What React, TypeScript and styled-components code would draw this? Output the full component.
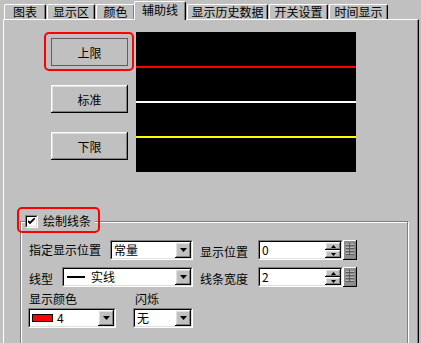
import React from 'react';
import styled, { createGlobalStyle, css } from 'styled-components';

const Global = createGlobalStyle`
  html, body { margin: 0; padding: 0; background: #c0c0c0; }
  body {
    font-family: "Noto Sans CJK SC", "Noto Sans", sans-serif;
    font-size: 12px;
    color: #000;
  }
`;

const raised = css`
  box-shadow: inset -1px -1px #000, inset 1px 1px #fff, inset -2px -2px #808080, inset 2px 2px #dfdfdf;
`;

const Window = styled.div`
  width: 421px;
  height: 343px;
  overflow: hidden;
  background: #c0c0c0;
`;

const TabStrip = styled.div`
  display: flex;
  align-items: flex-end;
  height: 19px;
  padding-left: 4px;
  gap: 1px;
  position: relative;
  z-index: 1;
`;

const Tab = styled.div<{ $w: number; $active?: boolean }>`
  box-sizing: border-box;
  width: ${(p) => p.$w}px;
  height: ${(p) => (p.$active ? 19 : 15)}px;
  margin: ${(p) => (p.$active ? '0 0 -1px -2px' : '0')};
  background: #c0c0c0;
  border-top: 1px solid #fff;
  border-left: 1px solid #fff;
  border-right: 1px solid #000;
  border-radius: 2px 2px 0 0;
  box-shadow: inset -1px 0 #808080;
  display: flex;
  align-items: center;
  justify-content: center;
  padding-bottom: ${(p) => (p.$active ? 2 : 0)}px;
  line-height: 12px;
  white-space: nowrap;
`;

const Panel = styled.div`
  box-sizing: border-box;
  margin-left: 3px;
  width: 416px;
  height: 324px;
  border-top: 1px solid #fff;
  border-left: 1px solid #fff;
  border-right: 1px solid #000;
  box-shadow: inset -1px 0 #808080;
  padding-top: 12px;
`;

const TopArea = styled.div`
  display: flex;
  padding-left: 47px;
  gap: 8px;
`;

const ButtonColumn = styled.div`
  display: flex;
  flex-direction: column;
  width: 77px;
  padding-top: 6px;
  gap: 19px;
`;

const Highlight = styled.div<{ $t: number; $r: number; $b: number; $l: number }>`
  position: relative;
  display: flex;
  width: fit-content;
  &::after {
    content: '';
    position: absolute;
    top: -${(p) => p.$t}px;
    right: -${(p) => p.$r}px;
    bottom: -${(p) => p.$b}px;
    left: -${(p) => p.$l}px;
    border: 2px solid #ff0000;
    border-radius: 5px;
    pointer-events: none;
  }
`;

const LegendSlot = styled(Highlight)`
  margin: -9px 0 0 -4px;
`;

const PushButton = styled.div<{ $flat?: boolean }>`
  box-sizing: border-box;
  width: 77px;
  height: 28px;
  background: #c0c0c0;
  display: flex;
  align-items: center;
  justify-content: center;
  ${(p) => (p.$flat ? 'box-shadow: inset 0 0 0 1px #5e5e5e;' : raised)}
`;

const Canvas = styled.svg`
  display: block;
  background: #000;
`;

const Group = styled.div`
  box-sizing: border-box;
  margin: 49px 0 0 16px;
  width: 388px;
  height: 200px;
  border: 1px solid #808080;
  box-shadow: inset 1px 1px #fff, 1px 1px #fff;
  padding-left: 8px;
`;

const Legend = styled.div`
  display: flex;
  align-items: center;
  gap: 5px;
  height: 16px;
  padding-right: 4px;
  background: #c0c0c0;
`;

const CheckBox = styled.div`
  box-sizing: border-box;
  width: 13px;
  height: 13px;
  border: 1px solid;
  border-color: #808080 #fff #fff #808080;
  display: flex;
`;

const CheckInner = styled.div`
  flex: 1;
  background: #fff;
  border: 1px solid;
  border-color: #000 #dfdfdf #dfdfdf #000;
  display: flex;
  align-items: center;
  justify-content: center;
`;

const Rows = styled.div`
  display: flex;
  flex-direction: column;
  gap: 7px;
  margin-top: 11px;
`;

const Row = styled.div`
  display: flex;
  align-items: center;
`;

const LeftCell = styled.div`
  display: flex;
  align-items: center;
  gap: 9px;
  width: 164px;
`;

const Label = styled.span<{ $pt?: number }>`
  white-space: nowrap;
  line-height: 16px;
  padding-top: ${(p) => p.$pt ?? 0}px;
`;

const RightLabel = styled(Label)`
  margin: 0 10px 0 7px;
  width: 48px;
`;

const Sunken = styled.div<{ $w: number }>`
  box-sizing: border-box;
  width: ${(p) => p.$w}px;
  height: 20px;
  border: 1px solid;
  border-color: #808080 #fff #fff #808080;
  display: flex;
`;

const SunkenInner = styled.div`
  flex: 1;
  display: flex;
  background: #fff;
  border: 1px solid;
  border-color: #000 #dfdfdf #dfdfdf #000;
  min-width: 0;
`;

const FieldText = styled.div`
  flex: 1;
  display: flex;
  align-items: center;
  gap: 4px;
  padding-left: 2px;
  line-height: 14px;
  white-space: nowrap;
`;

const DropButton = styled.div`
  width: 16px;
  background: #c0c0c0;
  display: flex;
  align-items: center;
  justify-content: center;
  ${raised}
`;

const SpinColumn = styled.div`
  width: 16px;
  display: flex;
  flex-direction: column;
`;

const SpinButton = styled.div`
  flex: 1;
  background: #c0c0c0;
  display: flex;
  align-items: center;
  justify-content: center;
  ${raised}
`;

const PadButton = styled.svg`
  display: block;
  margin-top: -1px;
`;

const Swatch = styled.div<{ $c: string }>`
  box-sizing: border-box;
  width: 21px;
  height: 8px;
  background: ${(p) => p.$c};
  border: 1px solid #000;
`;

const LineSample = styled.div`
  width: 18px;
  height: 2px;
  background: #000;
  margin: 0 2px 0 1px;
`;

const Row3 = styled.div`
  display: flex;
  gap: 17px;
  margin: 4px 0 0 -1px;
`;

const Col = styled.div<{ $pl: number }>`
  display: flex;
  flex-direction: column;
  gap: 1px;
  & > span {
    padding-left: ${(p) => p.$pl}px;
  }
`;

const Arrow = ({ up, w = 7 }: { up?: boolean; w?: number }) => {
  const h = Math.ceil(w / 2);
  return (
    <svg width={w} height={h} viewBox={`0 0 ${w} ${h}`} style={{ display: 'block' }}>
      <polygon points={up ? `0,${h} ${w},${h} ${w / 2},0` : `0,0 ${w},0 ${w / 2},${h}`} fill="#000" />
    </svg>
  );
};

const Combo = ({ w, children }: { w: number; children: React.ReactNode }) => (
  <Sunken $w={w}>
    <SunkenInner>
      <FieldText>{children}</FieldText>
      <DropButton>
        <Arrow />
      </DropButton>
    </SunkenInner>
  </Sunken>
);

const Pad = () => (
  <PadButton width={14} height={20} viewBox="0 0 14 20">
    <rect x="0" y="0" width="14" height="20" fill="#000" />
    <rect x="0" y="0" width="13" height="19" fill="#fff" />
    <rect x="1" y="1" width="12" height="18" fill="#808080" />
    <rect x="1" y="1" width="11" height="17" fill="#8e8e8e" />
    {[4, 7, 10, 13].map((y) => (
      <g key={y}>
        <rect x="3" y={y} width="8" height="1" fill="#b8b8b8" />
        <rect x="3" y={y + 1} width="8" height="1" fill="#5a5a5a" />
      </g>
    ))}
    <rect x="6" y="3" width="1" height="12" fill="#5a5a5a" />
  </PadButton>
);

const Spin = ({ value }: { value: string }) => (
  <Row>
    <Sunken $w={85}>
      <SunkenInner>
        <FieldText>{value}</FieldText>
        <SpinColumn>
          <SpinButton>
            <Arrow up w={5} />
          </SpinButton>
          <SpinButton>
            <Arrow w={5} />
          </SpinButton>
        </SpinColumn>
      </SunkenInner>
    </Sunken>
    <Pad />
  </Row>
);

const tabs: { label: string; w: number; active?: boolean }[] = [
  { label: '图表', w: 42 },
  { label: '显示区', w: 48 },
  { label: '颜色', w: 39 },
  { label: '辅助线', w: 52, active: true },
  { label: '显示历史数据', w: 81 },
  { label: '开关设置', w: 59 },
  { label: '时间显示', w: 59 },
];

export default function App() {
  return (
    <Window>
      <Global />
      <TabStrip>
        {tabs.map((t) => (
          <Tab key={t.label} $w={t.w} $active={t.active}>
            {t.label}
          </Tab>
        ))}
      </TabStrip>
      <Panel>
        <TopArea>
          <ButtonColumn>
            <Highlight $t={6} $r={6} $b={5} $l={7}>
              <PushButton $flat>上限</PushButton>
            </Highlight>
            <PushButton>标准</PushButton>
            <PushButton>下限</PushButton>
          </ButtonColumn>
          <Canvas width={220} height={140} viewBox="0 0 220 140">
            <rect x="0" y="34" width="220" height="2" fill="#ff0000" />
            <rect x="0" y="69" width="220" height="2" fill="#ffffff" />
            <rect x="0" y="104" width="220" height="2" fill="#ffff00" />
          </Canvas>
        </TopArea>
        <Group>
          <LegendSlot $t={6} $r={5} $b={4} $l={8}>
            <Legend>
              <CheckBox>
                <CheckInner>
                  <svg width="7" height="7" viewBox="0 0 7 7" style={{ display: 'block' }}>
                    <polyline points="0,3 2,5 7,0" fill="none" stroke="#000" strokeWidth="1.8" />
                  </svg>
                </CheckInner>
              </CheckBox>
              <Label>绘制线条</Label>
            </Legend>
          </LegendSlot>
          <Rows>
            <Row>
              <LeftCell>
                <Label>指定显示位置</Label>
                <Combo w={83}>常量</Combo>
              </LeftCell>
              <RightLabel $pt={3}>显示位置</RightLabel>
              <Spin value="0" />
            </Row>
            <Row>
              <LeftCell>
                <Label $pt={4}>线型</Label>
                <Combo w={131}>
                  <LineSample />
                  实线
                </Combo>
              </LeftCell>
              <RightLabel $pt={4}>线条宽度</RightLabel>
              <Spin value="2" />
            </Row>
          </Rows>
          <Row3>
            <Col $pl={1}>
              <Label>显示颜色</Label>
              <Combo w={88}>
                <Swatch $c="#ff0000" />
                4
              </Combo>
            </Col>
            <Col $pl={2}>
              <Label>闪烁</Label>
              <Combo w={60}>无</Combo>
            </Col>
          </Row3>
        </Group>
      </Panel>
    </Window>
  );
}
